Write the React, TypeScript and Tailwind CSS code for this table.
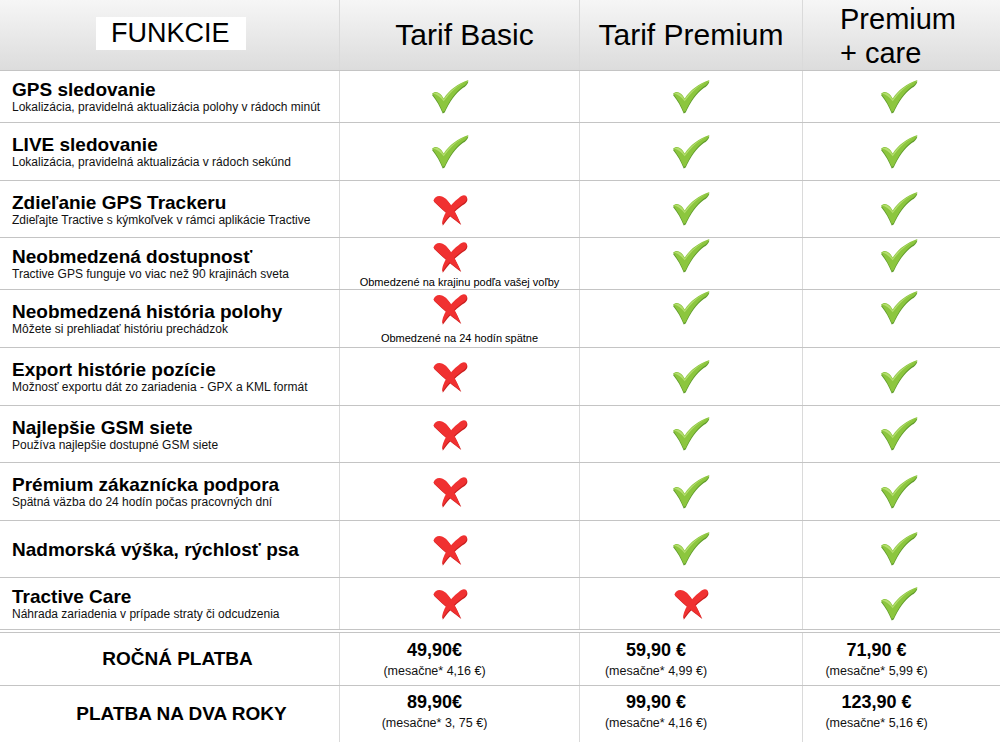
const Check = () => (
  <svg width="39" height="34" viewBox="0 0 40 35">
    <path
      d="M1 15.5 C4 12.5 8 13.5 11 17.5 L13 20.5 C19 11.5 27 5.5 38.5 1.5 C37.5 5 35 7 33 8 C25 14 19 22.5 14 33.5 L12 34.5 C9 27.5 6 21.5 1 15.5 Z"
      fill="#5f9b2b"
    />
    <path
      d="M1 14 C4 11 8 12 11 16 L13 19 C19 10 27 4 38.5 0 C37.5 3.5 35 5.5 33 6.5 C25 12.5 19 21 14 32 L12 33 C9 26 6 20 1 14 Z"
      fill="#8cc63e"
    />
    <path
      d="M2 14 C5 12 8 13 11 17 L12.5 19.5 L13 20 C19 11 27 5 37.5 1 C28 5 20 12 13 22 C10 18 6 15 2 14 Z"
      fill="#b3dd6e"
    />
  </svg>
)

const Cross = () => (
  <svg width="37" height="35" viewBox="0 0 40 37">
    <g fill="#c81e1e" transform="translate(0.6 1.2)">
      <path d="M1.5 9 C3 3 10 2 15 7 C21 13 26 23 31 34 C24 29 14 21 1.5 9 Z" />
      <path d="M37 4 C39 8 36 11 32 13 C24 19 17 26 11 35 C10 27 19 13 29 6 C32 3 35 2 37 4 Z" />
    </g>
    <g fill="#f03131">
      <path d="M1.5 9 C3 3 10 2 15 7 C21 13 26 23 31 34 C24 29 14 21 1.5 9 Z" />
      <path d="M37 4 C39 8 36 11 32 13 C24 19 17 26 11 35 C10 27 19 13 29 6 C32 3 35 2 37 4 Z" />
    </g>
  </svg>
)

type Row = {
  title: string
  sub?: string
  h: string
  cells: boolean[]
  note?: string
}

const rows: Row[] = [
  { title: "GPS sledovanie", sub: "Lokalizácia, pravidelná aktualizácia polohy v rádoch minút", h: "h-[52px]", cells: [true, true, true] },
  { title: "LIVE sledovanie", sub: "Lokalizácia, pravidelná aktualizácia v rádoch sekúnd", h: "h-[58px]", cells: [true, true, true] },
  { title: "Zdieľanie GPS Trackeru", sub: "Zdieľajte Tractive s kýmkoľvek v rámci aplikácie Tractive", h: "h-[57px]", cells: [false, true, true] },
  {
    title: "Neobmedzená dostupnosť",
    sub: "Tractive GPS funguje vo viac než 90 krajinách sveta",
    h: "h-[52px]",
    cells: [false, true, true],
    note: "Obmedzené na krajinu podľa vašej voľby",
  },
  {
    title: "Neobmedzená história polohy",
    sub: "Môžete si prehliadať históriu prechádzok",
    h: "h-[58px]",
    cells: [false, true, true],
    note: "Obmedzené na 24 hodín spätne",
  },
  { title: "Export histórie pozície", sub: "Možnosť exportu dát zo zariadenia - GPX a KML formát", h: "h-[58px]", cells: [false, true, true] },
  { title: "Najlepšie GSM siete", sub: "Používa najlepšie dostupné GSM siete", h: "h-[57px]", cells: [false, true, true] },
  { title: "Prémium zákaznícka podpora", sub: "Spätná väzba do 24 hodín počas pracovných dní", h: "h-[58px]", cells: [false, true, true] },
  { title: "Nadmorská výška, rýchlosť psa", h: "h-[57px]", cells: [false, true, true] },
  { title: "Tractive Care", sub: "Náhrada zariadenia v prípade straty či odcudzenia", h: "h-[52px]", cells: [false, false, true] },
]

const prices = [
  {
    label: "ROČNÁ PLATBA",
    labelPad: "pl-[16px]",
    h: "h-[53px] border-b border-[#c4c4c4]",
    pt: "pt-[7px]",
    items: [
      ["49,90€", "(mesačne* 4,16 €)"],
      ["59,90 €", "(mesačne* 4,99 €)"],
      ["71,90 €", "(mesačne* 5,99 €)"],
    ],
  },
  {
    label: "PLATBA NA DVA ROKY",
    labelPad: "pl-[24px]",
    h: "h-[56px]",
    pt: "pt-[6px]",
    items: [
      ["89,90€", "(mesačne* 3, 75 €)"],
      ["99,90 €", "(mesačne* 4,16 €)"],
      ["123,90 €", "(mesačne* 5,16 €)"],
    ],
  },
]

const grid = "grid grid-cols-[340px_240px_223px_197px]"
const vline = "border-r border-[#dadada]"
const pricePad = ["pr-[50px]", "pr-[70px]", "pr-[50px]"]

export default function App() {
  return (
    <div className="w-[1000px] h-[742px] overflow-hidden bg-white text-black font-['Liberation_Sans',Arial,sans-serif]">
      {/* header */}
      <div className={`${grid} h-[71px] border-b border-[#c4c4c4] bg-gradient-to-b from-[#f6f6f6] to-[#dcdcdc]`}>
        <div className={`${vline} flex items-center pl-[96px] pb-[3px]`}>
          <div className="w-[150px] h-[33px] bg-white pl-[15px] text-[27px] leading-[33px]">FUNKCIE</div>
        </div>
        <div className={`${vline} flex items-center justify-center pl-[10px] text-[30px] leading-[34px]`}>Tarif Basic</div>
        <div className={`${vline} flex items-center justify-center text-[30px] leading-[34px]`}>Tarif Premium</div>
        <div className="pl-[37px] pt-[2px] text-[29px] leading-[34px]">
          Premium
          <br />+ care
        </div>
      </div>

      {rows.map((r, i) => (
        <div key={i} className={`${grid} ${r.h} border-b border-[#c4c4c4]`}>
          <div className={`${vline} flex flex-col justify-center pl-[12px] pt-[1px]`}>
            <div className="text-[19px] font-bold leading-[21px]">{r.title}</div>
            {r.sub && <div className="text-[12px] leading-[15px] text-[#111]">{r.sub}</div>}
          </div>
          {r.cells.map((ok, j) => (
            <div
              key={j}
              className={`${j < 2 ? vline : ""} flex flex-col items-center ${r.note ? "justify-start pt-[1px]" : "justify-center"}`}
            >
              <div className={j === 0 ? "mr-[18px]" : j === 2 ? "mr-[4px]" : ""}>{ok ? <Check /> : <Cross />}</div>
              {r.note && j === 0 && (
                <div className={`text-[11px] leading-[13px] ${i === 3 ? "mt-[2px]" : "mt-[6px]"}`}>{r.note}</div>
              )}
            </div>
          ))}
        </div>
      ))}

      <div className="h-[3px] border-b border-[#c4c4c4]" />

      {prices.map((p, i) => (
        <div key={i} className={`${grid} ${p.h}`}>
          <div className={`${vline} flex items-center justify-center ${p.labelPad} text-[19px] font-bold`}>{p.label}</div>
          {p.items.map(([price, monthly], j) => (
            <div key={j} className={`${j < 2 ? vline : ""} flex flex-col items-center ${p.pt} ${pricePad[j]}`}>
              <div className="text-[18px] font-bold leading-[21px]">{price}</div>
              <div className="mt-[2px] text-[12.5px] leading-[16px] text-[#111]">{monthly}</div>
            </div>
          ))}
        </div>
      ))}
    </div>
  )
}
